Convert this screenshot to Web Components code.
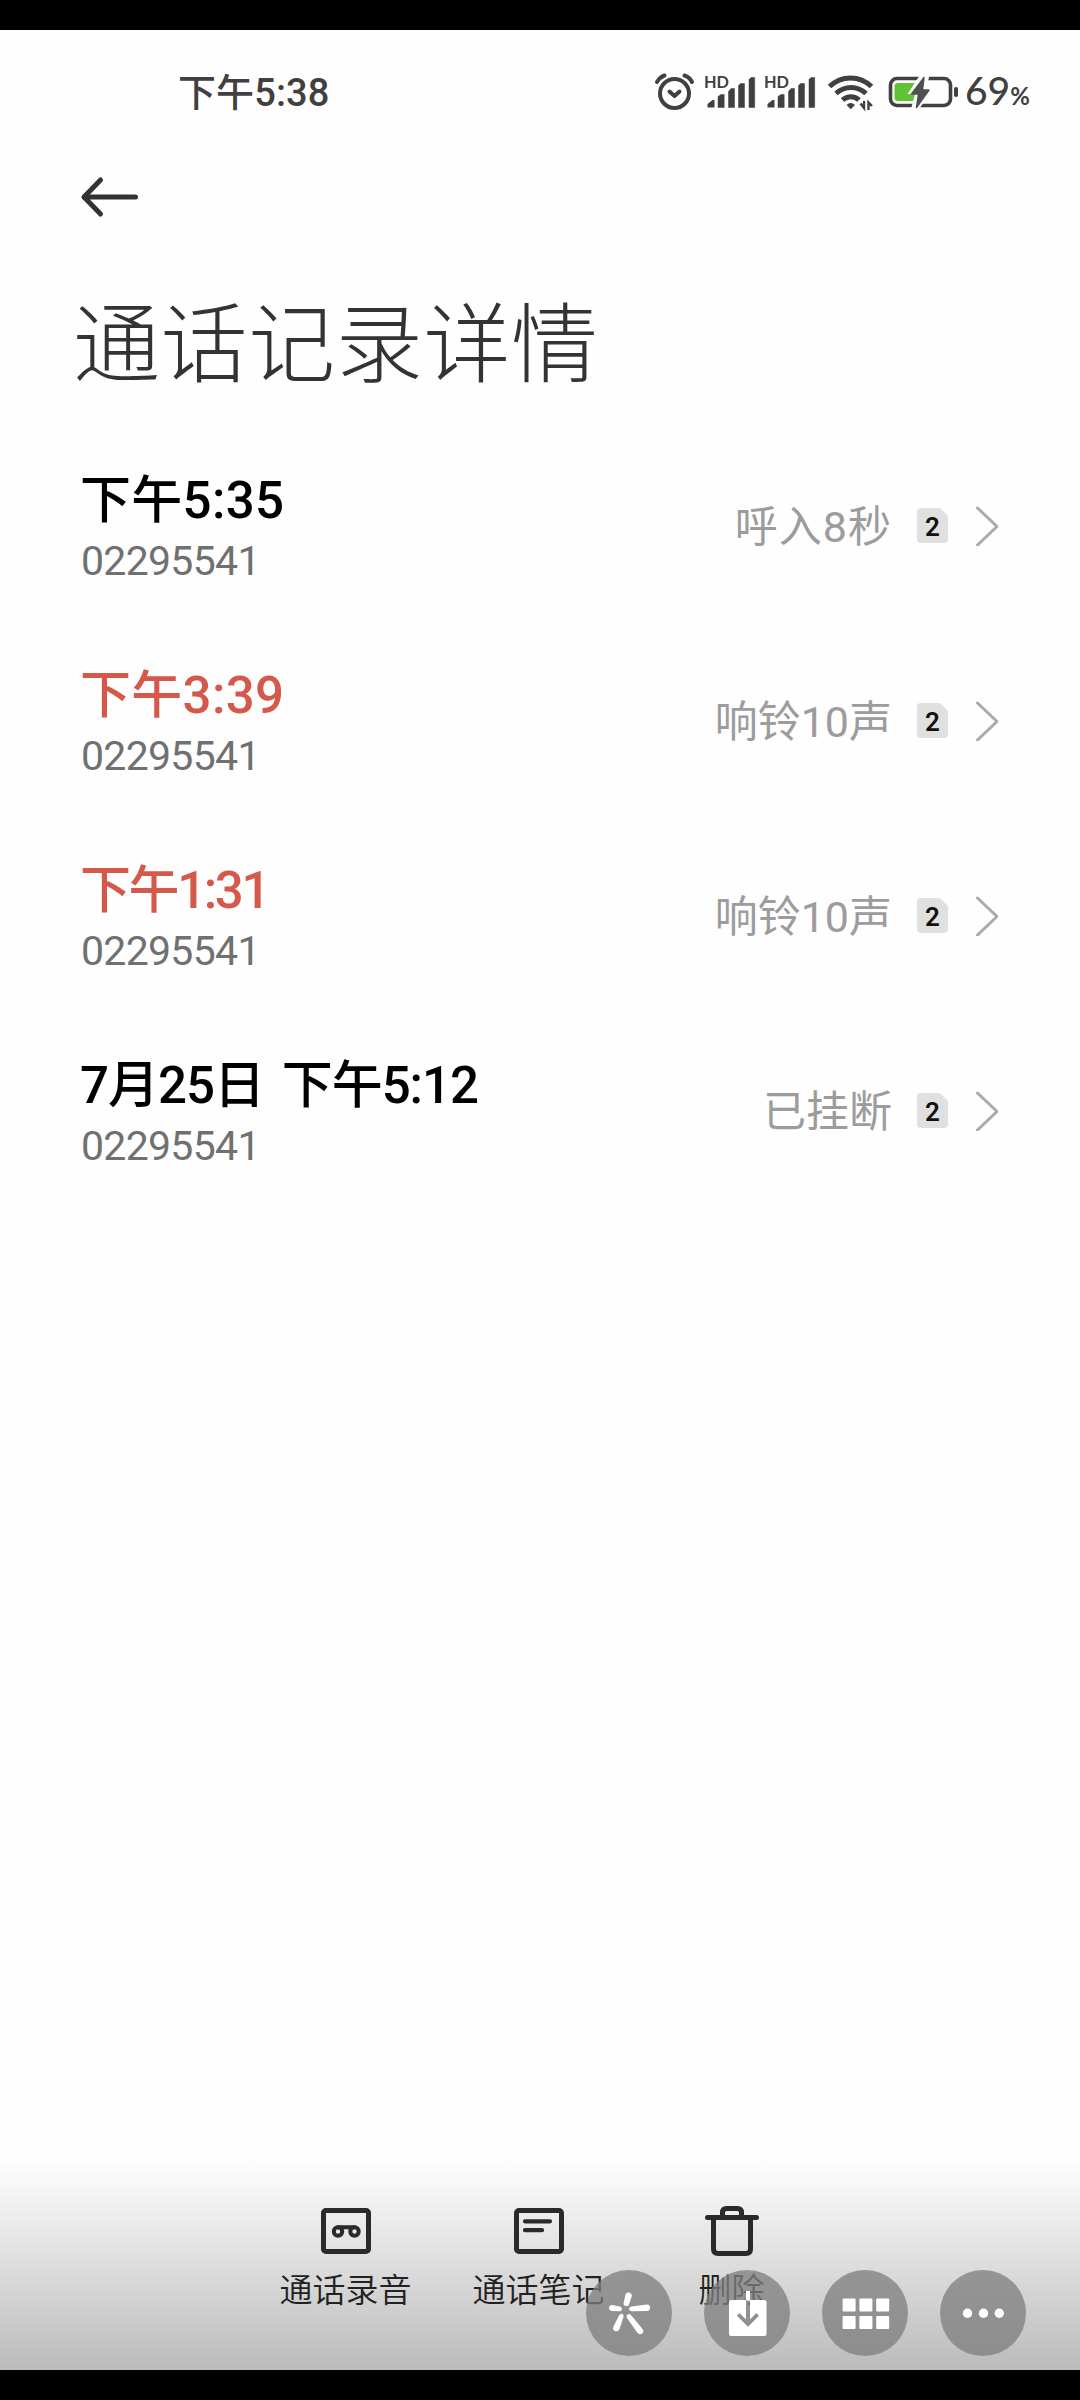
<!DOCTYPE html>
<html lang="zh-CN">
<head>
<meta charset="utf-8">
<title>通话记录详情</title>
<style>
html,body{margin:0;padding:0;background:#000}
body{font-family:Roboto,"Noto Sans CJK SC",sans-serif;width:1080px;height:2400px;overflow:hidden}
</style>
</head>
<body>
<call-page>
  <status-bar slot="status" time="下午5:38" battery="69"></status-bar>
  <page-header slot="header">通话记录详情</page-header>
  <call-row short number="02295541" state="呼入8秒" sim="2">下午5:35</call-row>
  <call-row missed number="02295541" state="响铃10声" sim="2">下午3:39</call-row>
  <call-row missed one number="02295541" state="响铃10声" sim="2">下午1:31</call-row>
  <call-row dated number="02295541" state="已挂断" sim="2">7月25日 下午5:12</call-row>
  <tool-item slot="tools" icon="record">通话录音</tool-item>
  <tool-item slot="tools" icon="note">通话笔记</tool-item>
  <tool-item slot="tools" icon="trash">删除</tool-item>
  <round-button slot="float" icon="spark"></round-button>
  <round-button slot="float" icon="save"></round-button>
  <round-button slot="float" icon="grid"></round-button>
  <round-button slot="float" icon="more"></round-button>
</call-page>
<script>
class Base extends HTMLElement{
  connectedCallback(){
    if(this.shadowRoot) return;
    this.attachShadow({mode:'open'}).innerHTML=this.render();
  }
  at(n){return this.getAttribute(n)||''}
}

customElements.define('call-page',class extends Base{render(){return `
<style>
:host{display:flex;flex-direction:column;box-sizing:border-box;width:1080px;height:2400px;padding:30px 0;background:#000;position:relative}
main{flex:1;display:flex;flex-direction:column;background:#fefefe}
.list{display:flex;flex-direction:column;flex:1}
.tools{display:flex;height:210px;padding-left:249px;box-sizing:border-box;background:linear-gradient(#fefefe,#f0f0f0 22%,#bbb)}
.float{position:absolute;left:586px;top:2270px;display:flex;gap:32px}
</style>
<main><slot name="status"></slot><slot name="header"></slot>
<div class="list"><slot></slot></div>
<div class="tools"><slot name="tools"></slot></div></main>
<div class="float"><slot name="float"></slot></div>`}});

customElements.define('signal-bars',class extends Base{render(){return `
<style>:host{display:block;width:60px;height:60px}svg{display:block}</style>
<svg width="60" height="60" viewBox="700 61 60 60" fill="#404040">
<text x="704" y="88" font-family="Lato" font-weight="700" font-size="17" textLength="25" lengthAdjust="spacingAndGlyphs">HD</text>
<path d="M707.500 107.500v-3.500l5-4h2v7.500z"/>
<path d="M718 107.500v-11l3-2h3.200v13zM728.500 107.500v-16l2.500-3h3.500v19zM738.500 107.500v-22l2-2h4v24zM749 107.500v-28l2-2h3.700v30z" stroke="#404040" stroke-width=".5" stroke-linejoin="round"/>
</svg>`}});

customElements.define('status-bar',class extends Base{render(){return `
<style>
:host{display:flex;align-items:center;height:122px;color:#404040;box-sizing:border-box;padding-left:178px}
.time{font-size:38px;font-weight:500;line-height:60px;width:472px;letter-spacing:.1px;padding-top:3px}
.icons{display:flex;align-items:center;height:60px}
svg{display:block}
.pct{font-family:Lato,sans-serif;font-size:39px;line-height:60px;font-weight:500;margin-left:3px;letter-spacing:0;padding-top:3px}
small{font-size:24px;font-weight:700;letter-spacing:0;margin-left:0}
</style>
<span class="time">${this.at('time')}</span>
<div class="icons">
<svg width="50" height="60" viewBox="650 61 50 60" fill="none" stroke="#404040" stroke-width="4" stroke-linecap="round">
<circle cx="674.500" cy="93.500" r="14.500"/><path d="M657 82q3-5 7.500-6.500M684.500 75.500q5 1.500 7.500 6.500M669.500 91.500l5 4.500 5-4.500" stroke-linejoin="round"/></svg>
<signal-bars></signal-bars><signal-bars></signal-bars>
<svg width="64" height="60" viewBox="820 61 64 60" fill="none" stroke="#404040" stroke-width="5">
<path d="M829.500 86.500c12-11.500 30-11.500 42 0M836 93.500c9-8 21-8 30 0M842.500 100c5-4.500 12-4.500 16.500 0"/><path d="M846.500 105q4-4 8.500 0l-4.300 4.300z" fill="#404040" stroke="none"/>
<path d="M860.500 103.500l3.500 4.500v-7M868.500 110v-7.500l3.500 3.500" stroke-width="2.400"/></svg>
<svg width="78" height="60" viewBox="884 61 78 60">
<rect x="890.500" y="78.500" width="60" height="27" rx="6.500" fill="none" stroke="#404040" stroke-width="3.600"/>
<path d="M898 83q-3.500 0-3.500 3.500v11q0 3.500 3.500 3.500h16l8-18z" fill="#62c332"/>
<path d="M920 75L907.500 94h7.500l-4 15h8L934 88h-7.500l3-13z" fill="#fefefe"/>
<path d="M924 77.500L911.500 94h7L916.500 107.500 929 90h-6.500z" fill="#505052" stroke="#505052" stroke-width="1.500" stroke-linejoin="round"/>
<rect x="954" y="87" width="4" height="10" rx="1.800" fill="#404040"/></svg>
<span class="pct">${this.at('battery')}<small>%</small></span>
</div>`}});

customElements.define('page-header',class extends Base{render(){return `
<style>
:host{display:flex;flex-direction:column;height:277px}
svg{display:block;margin:22px 0 0 76px}
h1{margin:63px 0 0 73px;font-size:87px;font-weight:300;line-height:110px;letter-spacing:.6px;color:#333;font-family:"Noto Sans CJK SC",sans-serif}
</style>
<svg width="68" height="46" viewBox="76 174 68 46" fill="none" stroke="#333" stroke-width="5" stroke-linecap="round" stroke-linejoin="round"><path d="M135.500 197H84M100.500 180L84 197l16.500 17"/></svg>
<h1><slot></slot></h1>`}});

customElements.define('sim-badge',class extends Base{render(){return `
<style>:host{display:grid;width:31px;height:35px;place-items:center}svg,span{grid-area:1/1}
span{font-size:26px;line-height:32px;font-weight:600;color:#111;padding-top:2px}</style>
<svg width="31" height="35" viewBox="0 0 31 35"><path d="M4 0h17q2 0 3 1l6 6q1 1 1 3v21q0 4-4 4H4q-4 0-4-4V4q0-4 4-4z" fill="#e0e0e0"/></svg><span><slot></slot></span>`}});

customElements.define('call-row',class extends Base{render(){
const m=this.hasAttribute('missed'),one=this.hasAttribute('one'),d=this.hasAttribute('dated'),s=this.hasAttribute('short');return `
<style>
:host{display:flex;align-items:center;height:195px;box-sizing:border-box;padding:0 82px 2px 80px}
.who{display:flex;flex-direction:column;flex:1;padding-top:8px}
.t{font-size:51px;font-weight:500;line-height:64px;color:${m?'#d4594a':'#000'};letter-spacing:${one?'-2.4px':d?'-1px':'.3px'};word-spacing:${d?'6px':'0'};white-space:pre}
.n{font-size:41px;font-weight:400;line-height:57px;color:#707070;letter-spacing:-1px;margin-left:1px}
.s{font-size:43px;font-weight:400;line-height:60px;color:#9c9c9c;margin:0 25px 0 0;padding-top:3px;letter-spacing:${s?'1px':'0'}}
.n{letter-spacing:-.7px}
svg{display:block;margin-left:25px}
</style>
<div class="who"><span class="t"><slot></slot></span><span class="n">${this.at('number')}</span></div>
<span class="s">${this.at('state')}</span>
<sim-badge>${this.at('sim')}</sim-badge>
<svg width="25" height="40" viewBox="0 0 25 40" fill="none" stroke="#aaa" stroke-width="3" stroke-linecap="round"><path d="M4.500 2L24 20.500 4.500 39" stroke-linejoin="round"/></svg>`}});

const TOOL={
record:'<rect x="6.500" y="10.500" width="45" height="41" rx="2.500"/><g stroke-width="4"><circle cx="21" cy="31.500" r="4.200"/><circle cx="37.500" cy="31.500" r="4.200"/><path d="M21 27.300h16.500"/></g>',
note:'<rect x="6.500" y="10.500" width="45" height="41" rx="2.500"/><path stroke-width="4.200" d="M15 21.300h25M15 30.200h17"/>',
trash:'<path d="M4.500 17.500H53.500M10.500 18v31q0 4.500 4.500 4.500h28q4.500 0 4.500-4.500V18M19.500 17v-4.500q0-4 4-4h11q4 0 4 4V17"/>'};
customElements.define('tool-item',class extends Base{render(){return `
<style>
:host{display:flex;flex-direction:column;align-items:center;width:193px;padding-top:40px;box-sizing:border-box;color:#222}
svg{display:block}
span{font-size:33px;line-height:44px;margin-top:8px;font-weight:350;white-space:nowrap;font-family:"Noto Sans CJK SC",sans-serif}
</style>
<svg width="58" height="58" viewBox="0 0 58 58" fill="none" stroke="#2a2a2a" stroke-width="5" stroke-linecap="round" stroke-linejoin="round">${TOOL[this.at('icon')]}</svg>
<span><slot></slot></span>`}});

const ROUND={
spark:'<path d="M39.500 24.500q1-2.500 3.500-2t3 3l-3 9q-.8 2-3.200 1.500t-2.300-2.500zM26 35l8 1.500q2 .5 2 2.500t-2 2.200l-7.500-.2q-3.500-.3-3.500-3t3-3zM45.500 36.500L61 34.500q3-.2 3 3t-3 3.500l-15.500.2q-2.500-.2-2.500-2.200t2.500-2.500zM36.500 44q1.500.7 1 3L33.500 59q-1.500 3.200-4.500 2t-1.500-4.500L33 45.500q1.500-2.300 3.500-1.500zM41.500 44.500q2-1.300 3.500.5l11.500 14q2 3-.5 4.500t-4.500-.5L41 48q-1.300-2 .5-3.500z"/>',
save:'<path fill-rule="evenodd" d="M42 21h4v9.500h-4zM27 30h15v19.500l-6.500-6.500-2.700 2.800L44 56.800 55 45.800l-2.700-2.800-6.300 6.500V30h14.500q2 0 2 2v32q0 2-2 2H27q-2 0-2-2V32q0-2 2-2z"/>',
grid:[0,1,2].map(c=>[0,1].map(r=>`<rect x="${20.600+c*16.800}" y="${28.500+r*17.500}" width="13" height="13" rx="1"/>`).join('')).join(''),
more:'<circle cx="27.500" cy="43.300" r="4.700"/><circle cx="43.500" cy="43.300" r="4.700"/><circle cx="59.300" cy="43.300" r="4.700"/>'};
customElements.define('round-button',class extends Base{render(){return `
<style>:host{display:block;width:86px;height:86px;border-radius:50%;background:rgba(126,126,126,.76)}svg{display:block}</style>
<svg width="86" height="86" viewBox="0 0 86 86" fill="#fff">${ROUND[this.at('icon')]}</svg>`}});
</script>
</body>
</html>
